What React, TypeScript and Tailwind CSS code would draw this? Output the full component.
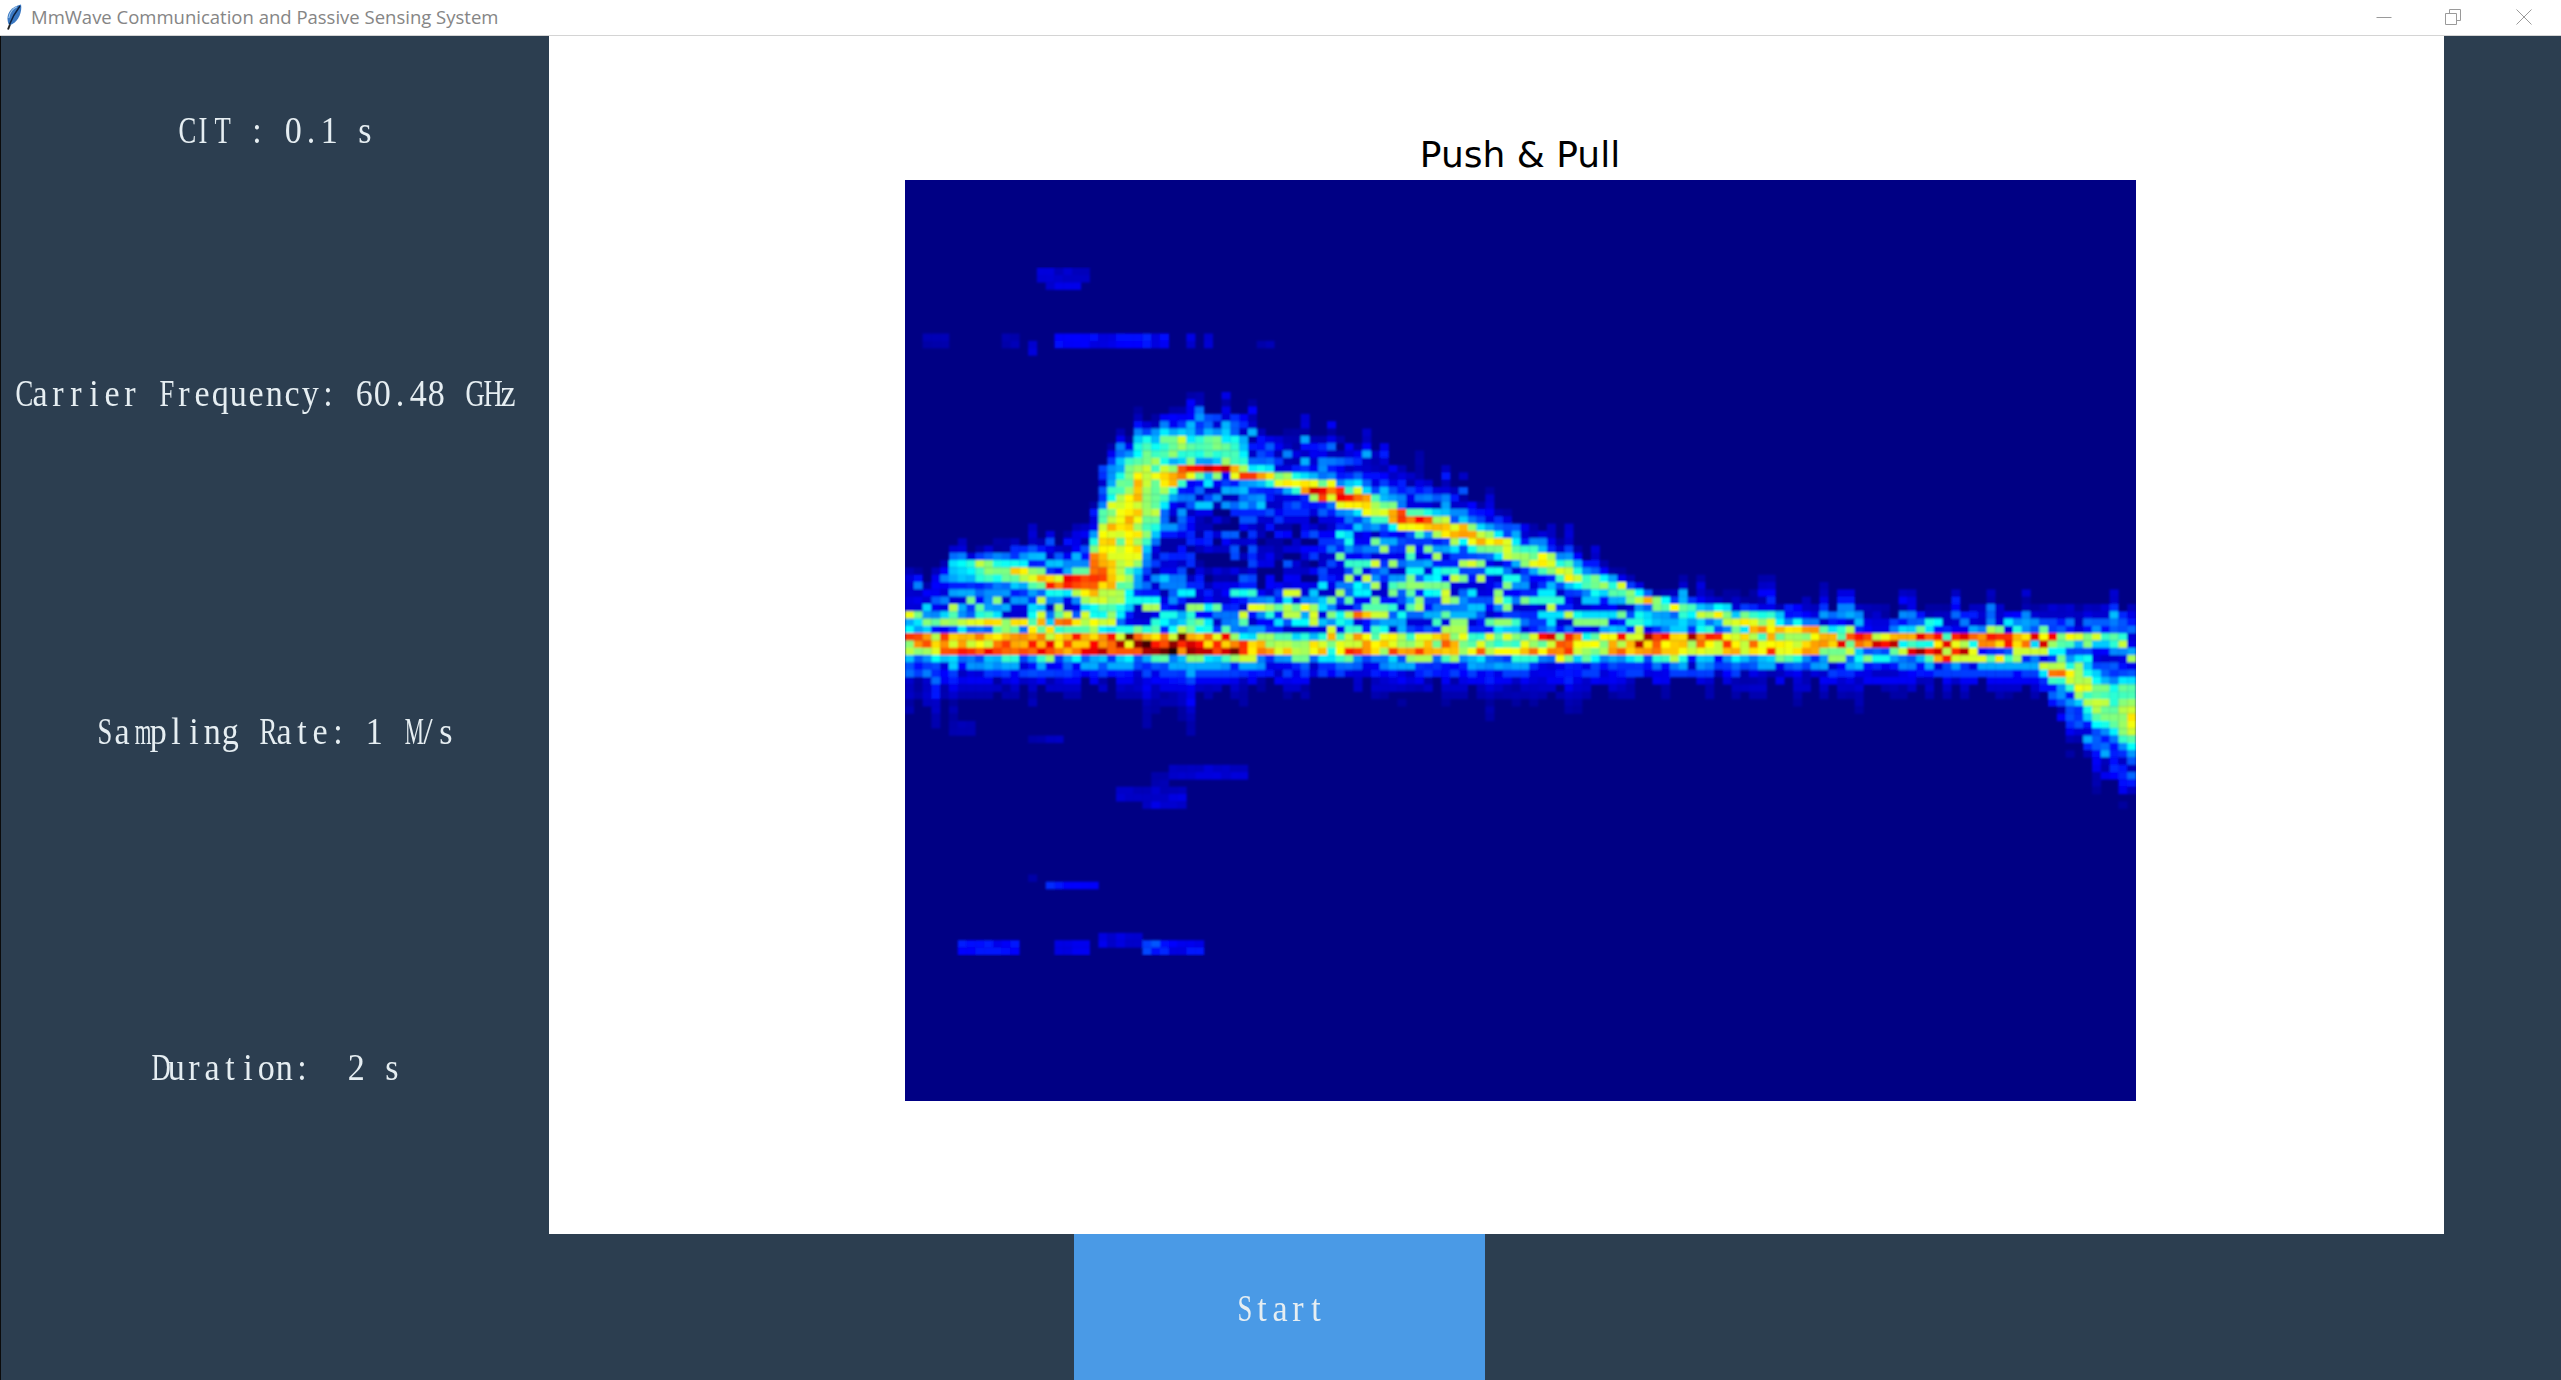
import { useMemo } from "react";

// spectrogram grid, sized on the reference image
const COLS = 140;
const ROWS = 126;
const IMG_X = 905;
const IMG_Y = 180;
const IMG_W = 1231;
const IMG_H = 921;

type P = [number, number, number, number]; // x, y, amp, half-thickness

const ridges: P[][] = [
  [[905,640,.92,8],[1000,640,.84,8],[1100,640,.96,8],[1150,640,1.05,7],[1200,640,1.02,7],[1250,642,.8,8],[1330,642,.72,9],[1480,640,.62,9],[1640,640,.95,7],[1700,640,.95,7],[1760,642,.72,8],[1840,640,.95,7],[2050,640,.97,7],[2060,640,.72,7],[2130,640,.74,7]],
  [[905,650,.68,6],[960,650,.92,7],[1120,650,.95,7],[1190,650,1.05,7],[1230,650,.95,6],[1330,650,.62,7],[1340,650,.76,7],[1400,650,.94,6],[1450,650,.84,7],[1500,652,.7,7],[1780,652,.74,7],[1830,650,.78,6]],
  [[905,618,.8,6],[950,620,.6,6],[1000,625,.78,6],[1100,624,.82,6],[1120,624,.5,5]],
  [[1247,608,.68,5],[1312,608,.68,5]],
  [[1330,618,.64,5],[1380,616,.7,5]],
  [[935,570,.3,16],[975,570,.58,15],[1025,573,.72,13],[1060,585,1,8],[1085,582,.86,18],[1117,547,.76,92],[1148,493,.76,70],[1170,478,.72,18],[1190,470,.95,6],[1230,470,1.05,6],[1263,476,.95,8],[1280,480,.72,10],[1331,493,.9,11],[1380,510,.72,15],[1416,523,.86,11],[1480,537,.72,14],[1502,547,.72,14],[1554,567,.56,14],[1610,587,.54,14],[1653,600,.66,8],[1740,623,.76,9],[1827,633,.8,10]],
  [[1150,447,.45,18],[1163,447,.58,18],[1232,447,.58,18],[1245,447,.4,14]],
  [[1890,650,.62,7],[1927,655,.95,7],[1966,655,.95,7],[1990,663,.76,6],[2018,663,.76,6],[2048,670,.92,6],[2065,672,.72,14],[2085,690,.66,32],[2110,708,.74,34],[2136,716,.72,44]],
];

// faint horizontal streaks away from the main returns
const streaks: [number, number, number, number][] = [
  [1040,1087,276,.08],[1050,1085,285,.09],
  [920,953,339,.05],[1000,1020,339,.05],[1057,1170,339,.12],[1145,1155,339,.2],[1185,1192,339,.09],[1208,1214,339,.09],[1260,1275,345,.05],[1025,1035,347,.08],
  [1173,1250,770,.08],[1150,1170,778,.05],[1113,1187,794,.07],[1140,1187,802,.09],
  [1043,1097,886,.17],[1030,1040,878,.04],
  [960,1017,948,.13],[1057,1093,948,.12],[1097,1140,940,.1],[1140,1165,948,.18],[1165,1203,948,.13],
  [1040,1065,738,.06],[1030,1040,740,.05],[950,975,730,.05],
];

const top: [number, number][] = [[905,600],[950,575],[1000,552],[1060,552],[1100,495],[1140,440],[1165,420],[1240,415],[1270,435],[1340,440],[1430,485],[1500,520],[1570,555],[1620,585],[1660,605],[1780,605],[1900,620],[2000,615],[2136,610]];
const hollow: [number, number][] = [[905,600],[1000,600],[1160,600],[1180,590],[1320,590],[1340,530],[1480,560],[1600,610],[2136,630]];

function lerpLine(pts: [number, number][], x: number) {
  for (let i = 1; i < pts.length; i++) {
    if (x <= pts[i][0]) {
      const t = (x - pts[i - 1][0]) / (pts[i][0] - pts[i - 1][0]);
      return pts[i - 1][1] + (pts[i][1] - pts[i - 1][1]) * t;
    }
  }
  return pts[pts.length - 1][1];
}

function rng(seed: number) {
  return () => {
    seed |= 0;
    seed = (seed + 0x6d2b79f5) | 0;
    let t = Math.imul(seed ^ (seed >>> 15), 1 | seed);
    t = (t + Math.imul(t ^ (t >>> 7), 61 | t)) ^ t;
    return ((t ^ (t >>> 14)) >>> 0) / 4294967296;
  };
}

function jet(v: number) {
  const c = (n: number) => Math.round(255 * Math.min(1, Math.max(0, n)));
  return `rgb(${c(1.5 - Math.abs(4 * v - 3))},${c(1.5 - Math.abs(4 * v - 2))},${c(1.5 - Math.abs(4 * v - 1))})`;
}

// length of the blue tail hanging under the band, by x
function tailBelow(x: number) {
  const pts: [number, number][] = [[905,16],[960,28],[1000,18],[1060,11],[1120,13],[1160,32],[1200,18],[1280,10],[1400,11],[1500,15],[1560,19],[1640,10],[1780,12],[1840,14],[2136,10]];
  return lerpLine(pts, x);
}

function buildCells() {
  const rand = rng(20240);
  const out: { x: number; y: number; fill: string }[] = [];
  const cw = IMG_W / COLS;
  const ch = IMG_H / ROWS;
  const prev = new Array(ROWS).fill(0.5);
  let drift = 0.5;
  for (let col = 0; col < COLS; col++) {
    const x = IMG_X + (col + 0.5) * cw;
    const spike = rand();
    const jitter = (rand() - 0.5) * 9;
    drift = 0.6 * drift + 0.4 * rand();
    const t = lerpLine(top, x) - (spike > 0.78 ? 26 * spike : 0);
    const hole = lerpLine(hollow, x);
    const bandLow = x > 2040 ? lerpLine([[2040,660],[2085,735],[2136,775]], x) : 656;
    const tailLen = tailBelow(x) * (0.45 + 1.3 * rand() ** 2);
    for (let row = 0; row < ROWS; row++) {
      const y = IMG_Y + (row + 0.5) * ch;
      // noise has short horizontal runs
      const r = rand() < 0.22 ? prev[row] : rand();
      prev[row] = r;
      let v = 0;
      for (const ridge of ridges) {
        if (x < ridge[0][0] || x > ridge[ridge.length - 1][0]) continue;
        for (let i = 1; i < ridge.length; i++) {
          const p = ridge[i - 1];
          const q = ridge[i];
          if (x > q[0]) continue;
          const k = (x - p[0]) / (q[0] - p[0]);
          const ry = p[1] + (q[1] - p[1]) * k + jitter * (p[3] < 20 ? 0.6 : 0);
          const amp = p[2] + (q[2] - p[2]) * k;
          const th = p[3] + (q[3] - p[3]) * k;
          const dy = Math.abs(y - ry);
          const wobble = amp > 0.9 ? 1 : 0.7 + 0.52 * drift;
          const core = amp * wobble * Math.exp(-((dy / th) ** 3)) * (0.74 + 0.34 * r);
          const halo = amp * 0.84 * Math.exp(-dy / (th + 16)) * (0.18 + 0.82 * r);
          v = Math.max(v, core, halo);
          break;
        }
      }
      if (y > t && y < 660) {
        const edge = Math.min(1, (y - t) / 24);
        const deep = y > hole ? 1 : 0.55;
        const dimHole = x > 1190 && x < 1320 && y > 510 && y < 590 ? 0.35 : 1;
        v = Math.max(v, (0.07 + 0.52 * r ** 1.6) * (0.35 + 0.65 * edge) * deep);
        v *= dimHole < 1 && v < 0.5 ? dimHole + 0.35 * r : 1;
      } else if (y <= t) {
        v *= Math.exp((y - t) / 8);
      }
      if (y >= bandLow) {
        const below = (y - bandLow) / tailLen;
        const tailV = 0.44 * Math.exp(-below) * (0.45 + 0.7 * r);
        v = y > bandLow + 5 ? Math.min(v, 0.55 * Math.exp(-(y - bandLow) / 16)) : v;
        v = Math.max(v, tailV);
        if (below > 4) v = 0;
      }
      for (const [x1, x2, sy, amp] of streaks) {
        if (x >= x1 && x <= x2 && Math.abs(y - sy) < ch * 0.8) v = Math.max(v, amp * (0.7 + 0.5 * r));
      }
      if (v > 0.03) {
        out.push({ x: col, y: row, fill: jet(v) });
      }
    }
  }
  return out;
}

function Spectrogram() {
  const cells = useMemo(buildCells, []);
  return (
    <svg
      viewBox={`0 0 ${COLS} ${ROWS}`}
      preserveAspectRatio="none"
      className="h-[921px] w-[1231px] bg-[#000084]"
    >
      <filter id="soft" x="0" y="0" width="1" height="1">
        <feGaussianBlur stdDeviation="0.14" />
      </filter>
      <g filter="url(#soft)">
        {cells.map((c) => (
          <rect key={`${c.x}-${c.y}`} x={c.x} y={c.y} width={1.03} height={1.03} fill={c.fill} />
        ))}
      </g>
    </svg>
  );
}

function glyphFit(ch: string) {
  if (ch === "m" || ch === "M") return "scale-x-[0.58]";
  if (/[A-Z]/.test(ch)) return "scale-x-[0.72]";
  return "scale-x-[0.92]";
}

function Label({ text, className }: { text: string; className?: string }) {
  return (
    <div className={`flex h-[40px] items-center font-['Liberation_Serif',serif] text-[37px] text-[#e6eef2] ${className ?? ""}`}>
      {text.split("").map((ch, i) => (
        <span key={i} className={`inline-block w-[18px] whitespace-pre text-center ${glyphFit(ch)}`}>
          {ch}
        </span>
      ))}
    </div>
  );
}

function Feather() {
  return (
    <svg viewBox="0 0 16 26" className="h-[26px] w-[16px]">
      <path d="M2 25.5 L5 18" stroke="#222" strokeWidth="2" fill="none" />
      <path d="M2.5 20 C-0.5 12 3 3 15 0.5 C16.5 8 12 19 4 21 Z" fill="#3a78c2" />
      <path d="M3.5 20.5 C6 14 9.5 8 14 2" stroke="#0e2240" strokeWidth="1.5" fill="none" />
      <path d="M2.8 14 C3.4 9 7 4.5 11 2.8" stroke="#a3cbef" strokeWidth="1.1" fill="none" />
    </svg>
  );
}

function TitleBar() {
  return (
    <div className="flex h-[36px] shrink-0 items-center border-b border-[#d4d4d4] bg-white">
      <div className="ml-[6px] mr-[9px] flex items-center pb-[1px]">
        <Feather />
      </div>
      <span className="pb-[2px] font-['Open_Sans',sans-serif] text-[18.5px] text-[#858585]">
        MmWave Communication and Passive Sensing System
      </span>
      <div className="ml-auto flex items-center pb-[2px] pr-[29px]">
        <svg width="16" height="16" viewBox="0 0 16 16" className="mr-[53px]">
          <path d="M0.5 8.5H15.5" stroke="#9a9a9a" strokeWidth="1" />
        </svg>
        <svg width="16" height="16" viewBox="0 0 16 16" className="mr-[55px]">
          <path d="M0.5 4.5H11.5V15.5H0.5Z M4.5 4.5V0.5H15.5V11.5H11.5" stroke="#9a9a9a" strokeWidth="1" fill="none" />
        </svg>
        <svg width="16" height="16" viewBox="0 0 16 16">
          <path d="M0.5 0.5L15.5 15.5M15.5 0.5L0.5 15.5" stroke="#9a9a9a" strokeWidth="1" />
        </svg>
      </div>
    </div>
  );
}

export default function App() {
  return (
    <div className="flex h-[1380px] w-full flex-col overflow-hidden bg-white">
      <TitleBar />
      <div className="flex flex-1 border-l border-[#0b0b0b] bg-[#2c3e50]">
        <aside className="flex w-[548px] shrink-0 flex-col items-center">
          <Label text="CIT : 0.1 s" className="mt-[75px]" />
          <Label text="Carrier Frequency: 60.48 GHz" className="mt-[223px] self-start pl-[12px]" />
          <Label text="Sampling Rate: 1 M/s" className="mt-[298px]" />
          <Label text="Duration:  2 s" className="mt-[296px]" />
        </aside>
        <div className="flex w-[1895px] shrink-0 flex-col">
          <main className="flex h-[1198px] shrink-0 flex-col items-center bg-white pl-[47px] pt-[96px]">
            <h1 className="mb-[3px] h-[45px] font-['DejaVu_Sans',sans-serif] text-[36px] leading-[45px] text-black">
              Push &amp; Pull
            </h1>
            <Spectrogram />
          </main>
          <div className="flex flex-1 pl-[525px]">
            <button className="h-full w-[411px] bg-[#4a9ae6] pt-[3px] text-white">
              <Label text="Start" className="justify-center" />
            </button>
          </div>
        </div>
      </div>
    </div>
  );
}
